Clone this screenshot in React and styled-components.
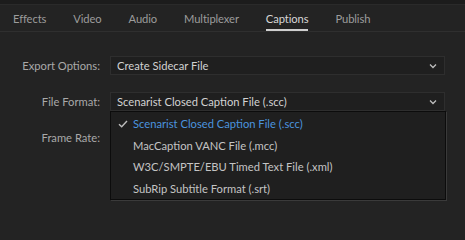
import React from 'react';
import styled, { createGlobalStyle } from 'styled-components';

const Global = createGlobalStyle`
  html, body { margin: 0; padding: 0; background: #232323; }
  body { font-family: Lato, "Open Sans", sans-serif; font-size: 11.2px; }
`;

const Screen = styled.div`
  width: 465px;
  height: 240px;
  background: #232323;
  overflow: hidden;
`;

const TopStrip = styled.div`
  height: 4px;
  background: #1c1c1c;
  border-bottom: 1px solid #2a2a2a;
`;

const Tabs = styled.div`
  display: flex;
  gap: 27px;
  padding: 0 13px;
  height: 26px;
  border-bottom: 1px solid #2f2f2f;
`;

const Tab = styled.div`
  display: flex;
  align-items: center;
  letter-spacing: -0.1px;
  color: ${p => (p.$active ? '#d6d6d6' : '#9c9c9c')};
  border-bottom: 2px solid ${p => (p.$active ? '#cfcfcf' : 'transparent')};
  padding-top: 3px;
  box-sizing: border-box;
`;

const Form = styled.div`
  display: grid;
  grid-template-columns: 100px 335px;
  column-gap: 10px;
  row-gap: 17px;
  padding-top: 24px;
  grid-auto-rows: 19px;
`;

const Label = styled.div`
  color: #a9a9a9;
  text-align: right;
  align-self: center;
`;

const Field = styled.div`
  position: relative;
`;

const Select = styled.div`
  height: 19px;
  box-sizing: border-box;
  border: 1px solid #2e2e2e;
  background: #1f1f1f;
  display: flex;
  align-items: center;
  justify-content: space-between;
  padding: 0 7px 0 6px;
  color: #d2d2d2;
`;

const Chevron = () => (
  <svg width="8" height="6" viewBox="0 0 8 6">
    <path d="M1 1.5 L4 4.5 L7 1.5" fill="none" stroke="#bdbdbd" strokeWidth="1.3" />
  </svg>
);

const Menu = styled.div`
  position: absolute;
  left: 0;
  top: 19px;
  width: 336px;
  height: 89px;
  box-sizing: border-box;
  background: #1f1f1f;
  border: 1px solid #0c0c0c;
  box-shadow: 1px 1px 0 #3a3a3a;
  padding-top: 1px;
  z-index: 2;
`;

const Item = styled.div`
  height: 21.6px;
  display: flex;
  align-items: center;
  color: ${p => (p.$selected ? '#4b93de' : '#c4c4c4')};
`;

const CheckSlot = styled.div`
  width: 21px;
  display: flex;
  justify-content: center;
  padding-left: 1px;
`;

const Check = () => (
  <svg width="10" height="8" viewBox="0 0 10 8">
    <path d="M1 4.2 L3.7 6.8 L9 1" fill="none" stroke="#bdbdbd" strokeWidth="1.4" />
  </svg>
);

const tabs = ['Effects', 'Video', 'Audio', 'Multiplexer', 'Captions', 'Publish'];
const formats = [
  'Scenarist Closed Caption File (.scc)',
  'MacCaption VANC File (.mcc)',
  'W3C/SMPTE/EBU Timed Text File (.xml)',
  'SubRip Subtitle Format (.srt)',
];

export default function App() {
  return (
    <Screen>
      <Global />
      <TopStrip />
      <Tabs>
        {tabs.map(t => (
          <Tab key={t} $active={t === 'Captions'}>{t}</Tab>
        ))}
      </Tabs>
      <Form>
        <Label>Export Options:</Label>
        <Select>
          <span>Create Sidecar File</span>
          <Chevron />
        </Select>
        <Label>File Format:</Label>
        <Field>
          <Select>
            <span>Scenarist Closed Caption File (.scc)</span>
            <Chevron />
          </Select>
          <Menu>
            {formats.map((f, i) => (
              <Item key={f} $selected={i === 0}>
                <CheckSlot>{i === 0 && <Check />}</CheckSlot>
                {f}
              </Item>
            ))}
          </Menu>
        </Field>
        <Label>Frame Rate:</Label>
        <div />
      </Form>
    </Screen>
  );
}
